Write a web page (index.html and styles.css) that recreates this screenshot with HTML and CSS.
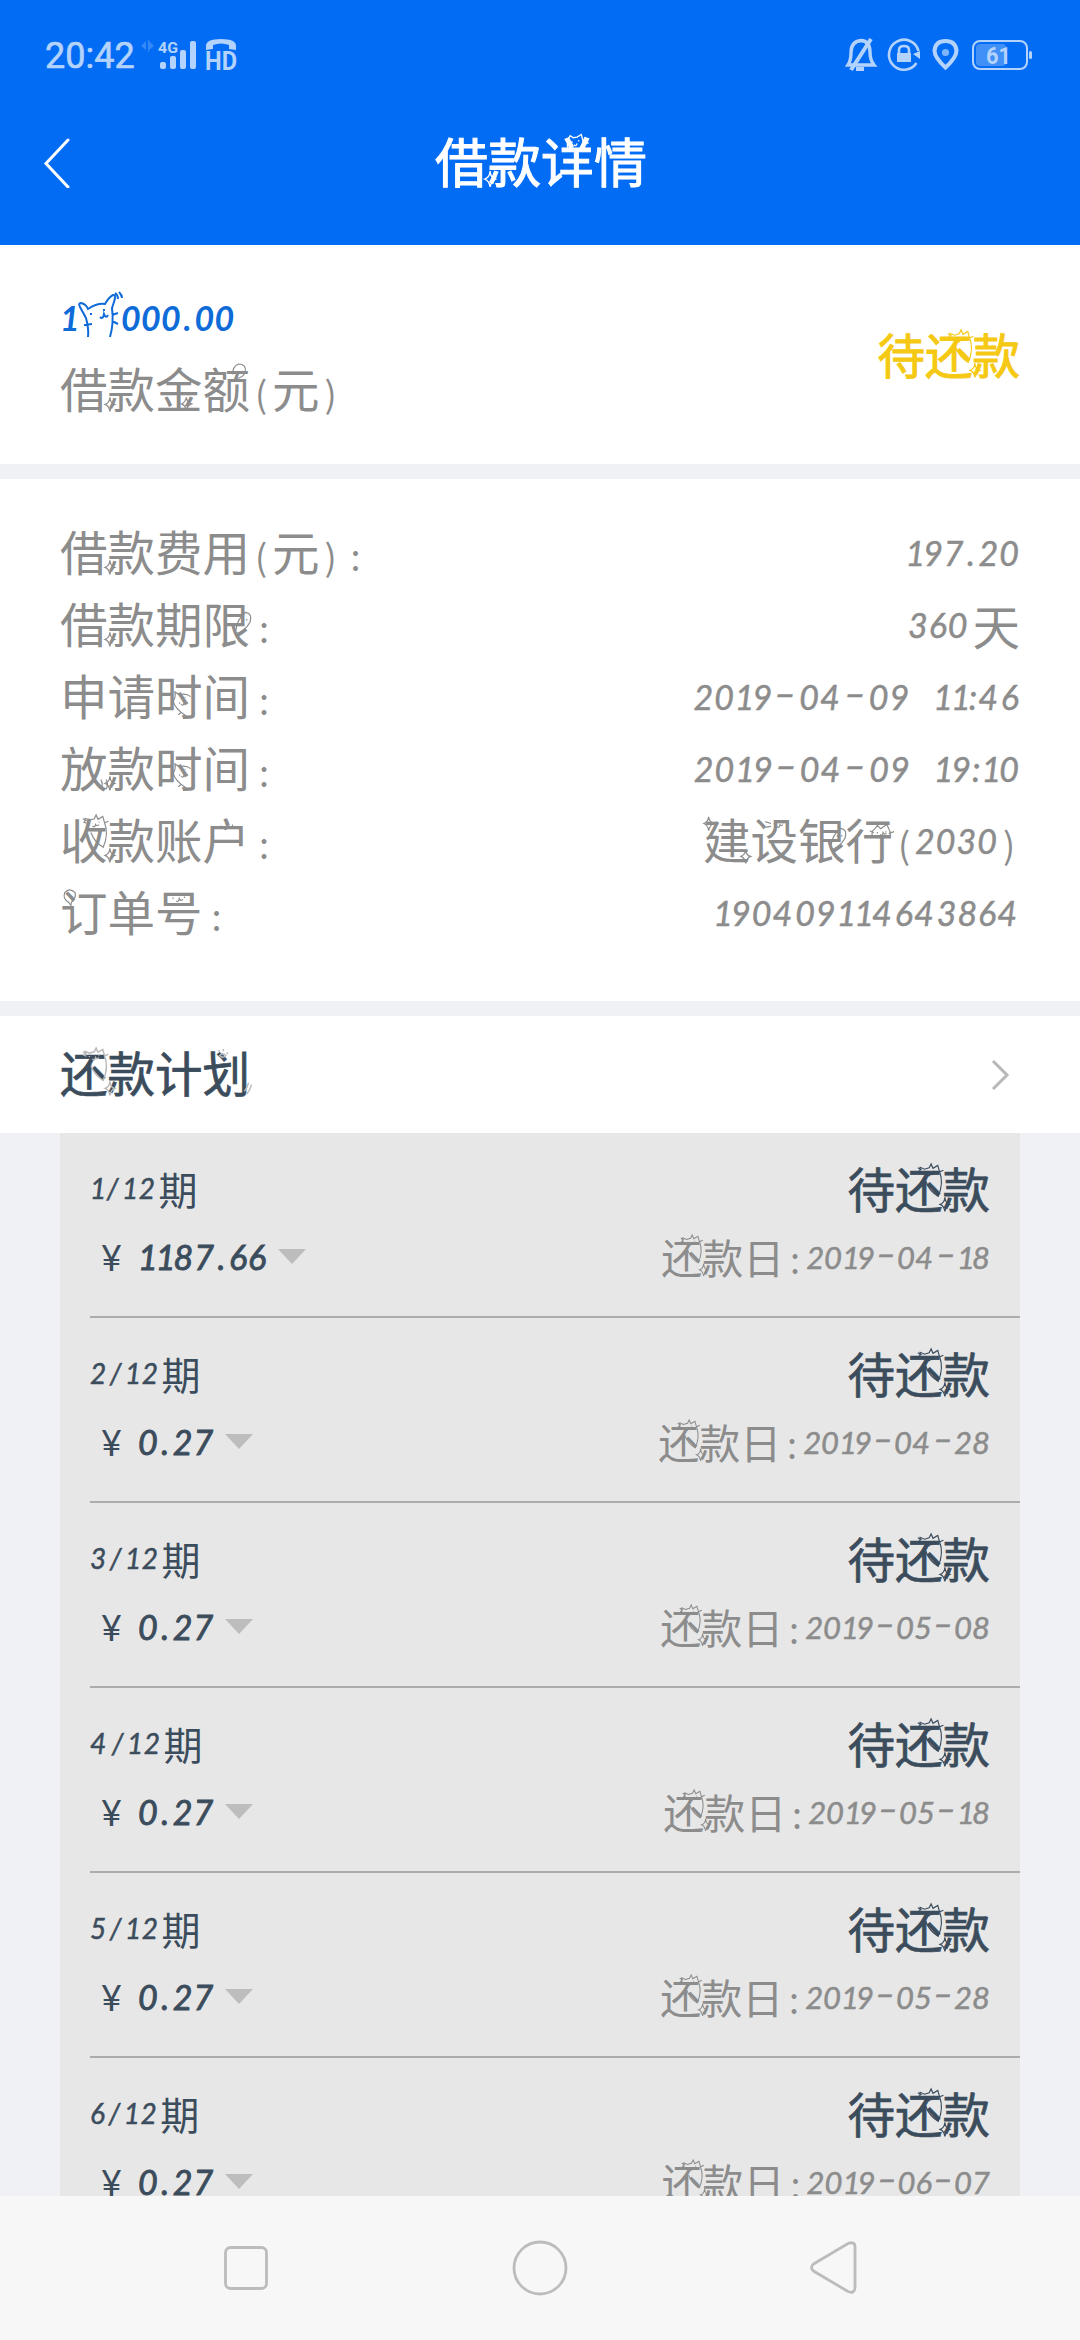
FILE: index.html
```html
<!DOCTYPE html>
<html lang="zh-CN">
<head>
    <meta charset="UTF-8">
    <meta name="viewport" content="width=device-width, initial-scale=1.0">
    <title>借款详情</title>
    <link rel="stylesheet" href="styles.css">
</head>
<body>

<!-- doodles drawn over some of the characters, 100 units = 1em -->
<svg class="defs" width="0" height="0">
    <symbol id="star" viewBox="0 0 100 100"><path d="M4 70 Q5 83 14 85 Q6 88 4 100 Q2 88 -6 85 Q3 82 4 70Z"/></symbol>
    <symbol id="starRight" viewBox="0 0 100 100"><path d="M66 70 Q67 81 77 84 Q68 87 66 98 Q64 87 56 84 Q64 81 66 70Z"/></symbol>
    <symbol id="stars" viewBox="0 0 100 100"><path d="M12 4 Q13 15 23 18 Q14 21 12 33 Q10 21 2 18 Q10 15 12 4Z M90 74 Q91 85 100 87 Q92 90 90 102 Q88 90 80 87 Q88 84 90 74Z"/></symbol>
    <symbol id="cat" viewBox="0 0 100 100"><path d="M52 17 L53 7 L62 11 L72 8 L76 0 L80 9 L90 3 L94 17 Q103 40 91 68 Q73 58 65 37 M48 8 L56 12 M49 15 L56 17 M93 17 L102 13 M62 17v2 M82 14v2 M68 23q5 5 7-3q3 5 7 0"/></symbol>
    <symbol id="catUp" viewBox="0 0 100 100"><path d="M52 32 Q48 20 51 10 L55 3 L61 7 L68 6 L76 1 L79 12 Q81 24 70 31 M78 17 L90 17 M77 23 L84 28 M47 11 L53 16 M59 14v2 M71 12v2 M62 20q4 5 6-2"/></symbol>
    <symbol id="catMid" viewBox="0 0 100 100"><path d="M38 63 Q44 57 42 44 L52 50 Q65 46 75 54 M38 63 Q42 80 65 94 M52 66v3 M64 54v2 M55 70q4 5 7-3q5 3 7-1 M54 88l-5 4"/></symbol>
    <symbol id="face" viewBox="0 0 100 100"><path d="M38 22v3 M62 20v3 M45 29q4 5 6-5q3 7 8 2"/></symbol>
    <symbol id="faceLeft" viewBox="0 0 100 100"><path d="M30 14 L42 18 M30 26 L42 24 M49 17v3 M67 15v3 M55 24q4 6 6-4q3 5 6 0"/></symbol>
    <symbol id="catRow" viewBox="0 0 100 100"><path d="M56 48 Q52 33 61 29 L66 22 L73 29 L86 20 L91 31 Q97 42 88 48 M50 33 L59 37 M90 39 L101 35 M66 36v3 M84 34v3 M72 41q4 5 6-4q3 6 7 1"/></symbol>
    <symbol id="bubble" viewBox="0 0 100 100"><path d="M63 22 Q61 6 75 0 Q92 0 89 17 Q85 29 68 31"/></symbol>
    <symbol id="leaf" viewBox="0 0 100 100"><path d="M69 67 Q72 41 90 28 Q105 31 99 49 Q88 68 69 73 M83 42v3 M92 42v3 M86 53v3"/></symbol>
    <symbol id="ticks" viewBox="0 0 100 100"><path d="M86 77q6 10 0 20 M97 77q6 10 0 20"/></symbol>
    <symbol id="paw" viewBox="0 0 100 100"><path d="M34 4v4 M43 2v5 M51 9v4 M35 16q7-8 13 0q-6 7-13 0Z M102 77q-3 12-10 20 M96 73q-3 12-9 18"/></symbol>
    <symbol id="balloon" viewBox="0 0 100 100"><path d="M18 32 Q5 24 10 12 Q20 0 32 12 Q34 25 24 32 L23 39Z"/></symbol>
</svg>

<header class="top">
    <div class="status-bar">
        <span class="clock">20:42</span>
        <svg class="signal" width="98" height="36" viewBox="140 36 98 36">
            <path d="M141 46l5-5v9zM148 40h1v12h-1zM154 46l-5-5v9z" opacity=".28"/>
            <text x="158" y="53" font-size="15" textLength="20" lengthAdjust="spacingAndGlyphs">4G</text>
            <rect x="160" y="62" width="6" height="7" rx="2"/>
            <rect x="170" y="56" width="6" height="13" rx="2"/>
            <rect x="180" y="50" width="6" height="19" rx="2"/>
            <rect x="190" y="41" width="6" height="28" rx="2"/>
            <path d="M206 50v-4q0-7 15-7t15 7v4l-7-1v-4q-8-3-16 0v4z"/>
            <text x="205" y="70" font-size="25" textLength="32" lengthAdjust="spacingAndGlyphs">HD</text>
        </svg>
        <svg class="indicators" width="190" height="36" viewBox="844 36 190 36">
            <g fill="none" stroke="currentColor" stroke-width="3.4">
                <path d="M848 65h26q-4-5-4-13 0-11-9-11.500-10 1-10 12 0 8-3 12.500z"/>
                <path d="M871 39l-20 31" stroke-width="4"/>
                <path d="M856 69h8" stroke-width="4"/>
                <path d="M918.500 51a15 15 0 1 0-2 12" stroke-width="2.600"/>
                <path d="M899 54v-4q0-4 5-4t5 4v4" stroke-width="2.600"/>
                <path d="M945.500 67.500q-11-10-11-17 1-9.500 11-9.500t11 9.500q0 7-11 17z" stroke-width="4"/>
                <rect x="973" y="41" width="54" height="28" rx="7" stroke-width="2"/>
            </g>
            <path d="M913 54l7-3v8zM897 53h14v9h-14z"/>
            <circle cx="945.500" cy="52.500" r="3.600" opacity=".7"/>
            <rect x="976" y="44" width="30" height="22" rx="4" opacity=".35"/>
            <rect x="1029" y="51" width="3" height="8" rx="1.500"/>
            <text x="986" y="64" font-size="24" textLength="25" lengthAdjust="spacingAndGlyphs">61</text>
        </svg>
    </div>
    <div class="title-bar">
        <svg class="back" width="28" height="50" viewBox="0 0 28 50"><path d="M25 2L3 25.500L25 49"/></svg>
        <h1 class="hand">借款详情</h1>
    </div>
</header>

<section class="panel summary">
    <div>
        <p class="amount"><span class="num">1</span><svg class="kitty" width="44" height="50" viewBox="0 0 44 50"><path d="M11 46Q12 38 9 27L3 16Q1 12 4 12Q9 13 11 18Q20 12 28 13Q32 6 36 4Q40 3 36 14L35 17Q37 32 33 46M38 2q3 2 3 6M42 1q3 3 3 6M35 24l6-2M35 30l6 3M7 34l8-1M14 22v2M27 18v2M23 26q3 3 4-3q2 5 4 1"/></svg><span class="num">000.00</span></p>
        <p class="hand">借款金额(元)</p>
    </div>
    <strong class="hand pending">待还款</strong>
</section>

<section class="panel details">
    <div class="row"><span class="hand">借款费用(元):</span><span class="num">197.20</span></div>
    <div class="row"><span class="hand">借款期限:</span><span class="mixed"><span class="num">360</span><span class="hand day">天</span></span></div>
    <div class="row"><span class="hand">申请时间:</span><span class="num">2019-04-09 11:46</span></div>
    <div class="row"><span class="hand">放款时间:</span><span class="num">2019-04-09 19:10</span></div>
    <div class="row"><span class="hand">收款账户:</span><span class="mixed"><span class="hand">建设银行(</span><span class="num">2030</span><span class="hand">)</span></span></div>
    <div class="row"><span class="hand">订单号:</span><span class="num">190409114643864</span></div>
</section>

<section class="panel plan-head">
    <h2 class="hand">还款计划</h2>
    <svg width="20" height="32" viewBox="0 0 20 32"><path d="M3 2L17 16L3 30"/></svg>
</section>

<main class="plan">
    <ul id="planList"></ul>
</main>

<nav class="nav-bar">
    <svg width="60" height="60" viewBox="0 0 60 60"><rect x="9.500" y="9.500" width="41" height="41" rx="5"/></svg>
    <svg width="60" height="60" viewBox="0 0 60 60"><circle cx="30" cy="30" r="26"/></svg>
    <svg width="60" height="60" viewBox="0 0 60 60"><path d="M9.500 26L44 5.500Q51 3 51 9V50Q50.500 56 44 53.500L9.500 33Q5.500 29.500 9.500 26Z"/></svg>
</nav>

<script>
    const plan = [
        ['1187.66', '2019-04-18'],
        ['0.27', '2019-04-28'],
        ['0.27', '2019-05-08'],
        ['0.27', '2019-05-18'],
        ['0.27', '2019-05-28'],
        ['0.27', '2019-06-07']
    ];

    document.getElementById('planList').innerHTML = plan.map(([amount, date], i) => `
        <li>
            <div class="line">
                <span class="term mixed"><span class="num">${i + 1}/12</span><span class="hand">期</span></span>
                <strong class="hand">待还款</strong>
            </div>
            <div class="line">
                <span class="money mixed"><span class="yen">¥</span><span class="num">${amount}</span><i class="arrow"></i></span>
                <span class="due mixed"><span class="hand">还款日:</span><span class="num">${date}</span></span>
            </div>
        </li>`).join('');

    const doodles = {
        '款': 'star', '还': 'cat', '收': 'cat', '详': 'catUp', '时': 'catMid',
        '额': 'bubble', '限': 'leaf', '银': 'leaf', '放': 'ticks', '划': 'paw',
        '建': 'stars', '设': 'faceLeft', '行': 'catRow', '号': 'face', '户': 'face',
        '订': 'balloon', '金': 'starRight'
    };

    document.querySelectorAll('.hand').forEach(el => {
        el.innerHTML = [...el.textContent].map(c => {
            if ('():'.includes(c)) return `<span class="mark${c === ':' ? ' colon' : ''}">${c}</span>`;
            if (!doodles[c]) return c;
            return `<span class="char">${c}<svg class="doodle"><use href="#${doodles[c]}"/></svg></span>`;
        }).join('');
    });

    // uneven spacing of the handwritten digits
    const widths = { '-': 'dash', '1': 'one', '4': 'four', '.': 'dot' };
    document.querySelectorAll('.num').forEach(el => {
        el.innerHTML = el.textContent.replace(/[-14.]/g, c => `<span class="${widths[c]}">${c}</span>`);
    });
</script>

</body>
</html>
```
FILE: styles.css
```css
* {
    margin: 0;
    padding: 0;
    box-sizing: border-box;
}

body {
    width: 1080px;
    height: 2340px;
    display: flex;
    flex-direction: column;
    overflow: hidden;
    font-family: "Noto Sans CJK SC", sans-serif;
    font-size: 47.5px;
    line-height: 72px;
    color: #8c8c8c;
    background-color: #f0f1f5;
}

.defs {
    position: absolute;
}

.top {
    height: 245px;
    flex: none;
    background-color: #036cf5;
    color: #fff;
}

.status-bar {
    height: 108px;
    padding: 0 46px 0 45px;
    display: flex;
    align-items: center;
    color: #b4d3fc;
    font-family: Roboto, sans-serif;
}

.status-bar svg {
    fill: currentColor;
    font-weight: bold;
    overflow: visible;
}

.clock {
    width: 95px;
    font-size: 36px;
    padding-top: 4px;
    -webkit-text-stroke: 0.6px;
}

.indicators {
    margin-left: auto;
}

.title-bar {
    height: 110px;
    display: flex;
    align-items: center;
    padding-left: 43px;
}

.back {
    fill: none;
    stroke: #fff;
    stroke-width: 3;
    stroke-linecap: round;
}

h1 {
    flex: 1;
    padding: 0 69px 6px 0;
    text-align: center;
    font-size: 53px;
    font-weight: normal;
    -webkit-text-stroke: 1px;
}

.hand {
    white-space: nowrap;
}

.mixed {
    display: flex;
    align-items: center;
}

.char {
    position: relative;
    display: inline-block;
}

.doodle {
    position: absolute;
    left: 0;
    top: calc(50% - 0.5em);
    width: 1em;
    height: 1em;
    overflow: visible;
    fill: none;
    stroke: currentColor;
    stroke-width: 2.5;
}

symbol {
    overflow: visible;
}

.mark {
    display: inline-block;
    width: 22px;
    text-align: center;
    font-size: 36px;
}

.colon {
    width: 28px;
}

.num {
    font-family: Lato, sans-serif;
    font-style: italic;
    font-size: 34px;
    letter-spacing: 1px;
    white-space: pre;
    word-spacing: 14px;
    -webkit-text-stroke: 0.5px;
}

.dash {
    display: inline-block;
    width: 26px;
    text-align: center;
    transform: translateY(-4px) scaleX(1.8);
}

.one {
    margin-right: -3px;
}

.four {
    margin-right: 2px;
}

.dot {
    margin: 0 2.5px;
}

.panel {
    flex: none;
    background-color: #fff;
    padding: 38px 60px 0;
    margin-bottom: 15px;
}

.summary {
    height: 219px;
    display: flex;
    justify-content: space-between;
}

.amount {
    height: 69px;
    display: flex;
    align-items: center;
    color: #0e6bd8;
}

.amount .num {
    font-weight: bold;
    letter-spacing: 0.3px;
    -webkit-text-stroke: 0;
}

.kitty {
    margin: 0 0 4px;
    overflow: visible;
    fill: none;
    stroke: currentColor;
    stroke-width: 2;
}

.pending {
    line-height: 142px;
    font-weight: normal;
    color: #f5c913;
    -webkit-text-stroke: 1px;
}

.details {
    height: 522px;
}

.row {
    height: 72px;
    display: flex;
    justify-content: space-between;
    align-items: center;
}

.day {
    margin-left: 4px;
}

.plan-head {
    height: 117px;
    padding: 0 70px 0 60px;
    margin-bottom: 0;
    display: flex;
    justify-content: space-between;
    align-items: center;
}

.plan-head svg {
    fill: none;
    stroke: #b8b8b8;
    stroke-width: 3;
}

h2,
.plan strong {
    font-size: 47.5px;
    font-weight: normal;
    color: #3b4c5c;
    -webkit-text-stroke: 0.7px;
}

h2 {
    padding-bottom: 5px;
}

.plan {
    flex: 1;
    min-height: 0;
    overflow: hidden;
    padding: 0 60px;
}

.plan ul {
    list-style: none;
    padding-left: 30px;
    background-color: #e7e7e7;
}

.plan li {
    height: 185px;
    padding: 20px 30px 0 0;
    border-bottom: 2px solid #acacac;
}

.line {
    height: 69px;
    display: flex;
    justify-content: space-between;
    align-items: center;
}

.term {
    color: #3b4c5c;
    font-size: 39px;
}

.term .num {
    font-size: 28px;
    letter-spacing: 3.5px;
}

.money {
    padding-left: 11px;
    color: #3b4c5c;
}

.yen {
    width: 37px;
    font-family: Lato, sans-serif;
    font-size: 36px;
}

.money .num {
    -webkit-text-stroke: 0.9px;
}

.arrow {
    margin-left: 11px;
    border: 14px solid transparent;
    border-top: 15px solid #bdbdbd;
    border-bottom: 0;
}

.due {
    font-size: 41px;
}

.due .num {
    font-size: 31px;
    letter-spacing: 0;
}

.due .mark {
    width: 22px;
}

.due .dash {
    width: 22px;
}

.nav-bar {
    flex: none;
    height: 144px;
    display: grid;
    grid-template-columns: repeat(3, 294px);
    justify-content: center;
    place-items: center;
    background-color: #f7f7f7;
}

.nav-bar svg {
    fill: none;
    stroke: #bcbcbc;
    stroke-width: 2.8;
}
```
